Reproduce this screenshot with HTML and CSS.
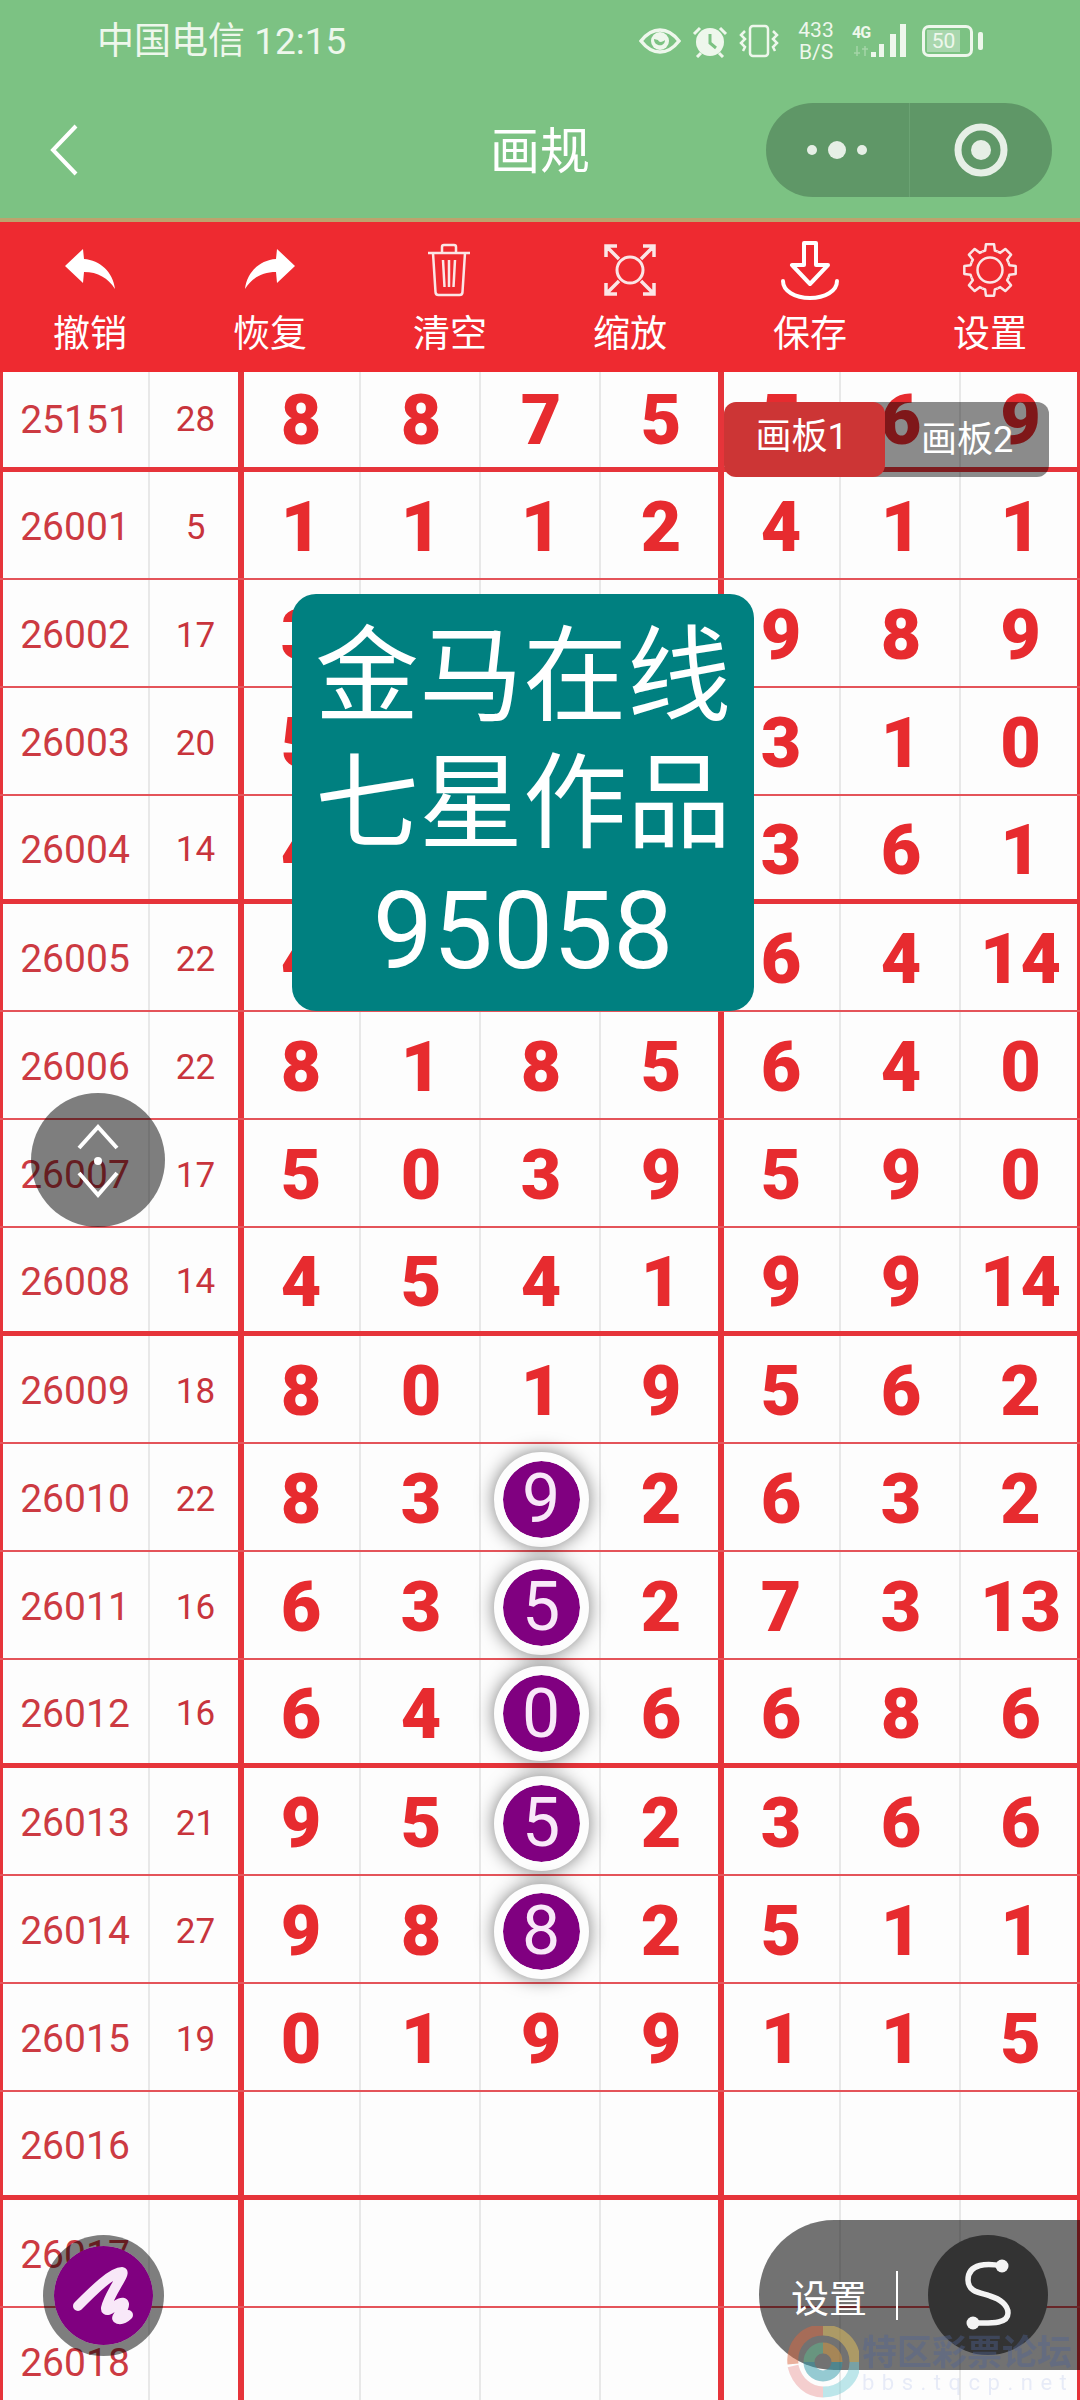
FILE: index.html
```html
<!doctype html>
<html>
<head>
  <meta charset="utf-8">
  <title>画规</title>
  <link rel="stylesheet" href="styles.css">
</head>
<body>
  <div id="app">
    <div class="top">
      <div class="status">
        <div class="carrier">中国电信 12:15</div>
        <div class="status-icons">
          <svg class="ic-eye" viewBox="0 0 42 26"><path d="M2 13C9 4 15 2 21 2s12 2 19 11c-7 9-13 11-19 11S9 22 2 13z" fill="none" stroke="#eef7ec" stroke-width="3.5"/><circle cx="21" cy="13" r="9" fill="#eef7ec"/><path d="M15 11c0 5 4 7 8 6 2-1 3-3 3-5-2 2-6 3-7 0z" fill="#7cc283"/></svg>
          <svg class="ic-alarm" viewBox="0 0 36 33"><circle cx="18" cy="17" r="14" fill="#eef7ec"/><path d="M18 9v9l6 5" fill="none" stroke="#7cc283" stroke-width="3"/><path d="M2 9l6-6M34 9l-6-6M5 32l4-4M31 32l-4-4" stroke="#eef7ec" stroke-width="3"/></svg>
          <svg class="ic-vib" viewBox="0 0 40 34"><rect x="11" y="2" width="18" height="30" rx="3" fill="none" stroke="#eef7ec" stroke-width="2.5"/><path d="M6 7L2 11l4 4-4 4 4 4-2 4M34 7l4 4-4 4 4 4-4 4 2 4" fill="none" stroke="#eef7ec" stroke-width="2.5"/></svg>
          <div class="speed">433<br>B/S</div>
          <div class="net">
            <div class="net-type">4G<svg class="ic-updown" viewBox="0 0 18 10"><path d="M5 0v10M13 0v10M2 7h6M10 3h6" stroke="#eef7ec" stroke-width="1.5"/></svg></div>
            <svg class="ic-bars" viewBox="0 0 36 34"><rect x="0" y="28" width="5" height="5" fill="#eef7ec"/><rect x="8" y="20" width="5" height="13" fill="#eef7ec"/><rect x="19" y="10" width="6" height="23" fill="#eef7ec"/><rect x="29" y="0" width="6" height="33" fill="#eef7ec"/></svg>
          </div>
          <div class="battery"><div class="battery-level">50</div></div>
          <div class="battery-nub"></div>
        </div>
      </div>
      <div class="nav">
        <svg class="back" viewBox="0 0 30 52"><path d="M27 2L4 26l23 24" fill="none" stroke="#fff" stroke-width="4"/></svg>
        <div class="nav-title">画规</div>
        <div class="capsule">
          <div class="capsule-side">
            <svg width="64" height="20" viewBox="0 0 64 20"><circle cx="7" cy="10" r="5" fill="#e6efe6"/><circle cx="32" cy="10" r="9" fill="#e6efe6"/><circle cx="57" cy="10" r="5" fill="#e6efe6"/></svg>
          </div>
          <div class="capsule-side">
            <svg width="54" height="54" viewBox="0 0 54 54"><circle cx="27" cy="27" r="23" fill="none" stroke="#e6efe6" stroke-width="7"/><circle cx="27" cy="27" r="10" fill="#e6efe6"/></svg>
          </div>
        </div>
      </div>
    </div>

    <div class="toolbar">
      <div class="tool">
        <svg viewBox="0 0 60 60"><path d="M5 26L23 9l1 10c16 1 29 13 31 30-7-11-17-17-31-17l-1 11z" fill="#fff"/></svg>
        <div class="tool-label">撤销</div>
      </div>
      <div class="tool">
        <svg viewBox="0 0 60 60"><path d="M55 26L37 9l-1 10C20 20 7 32 5 49c7-11 17-17 31-17l1 11z" fill="#fff"/></svg>
        <div class="tool-label">恢复</div>
      </div>
      <div class="tool">
        <svg viewBox="0 0 60 60" fill="none" stroke="#fbe6e6" stroke-width="2.5"><path d="M8 13h42M22 12V7q0-2 2-2h10q2 0 2 2v5M13 13l2.500 39q0 3 3 3h21q3 0 3-3L45 13M23 20l1.500 27M29 20v27M35 20l-1.500 27"/></svg>
        <div class="tool-label">清空</div>
      </div>
      <div class="tool">
        <svg viewBox="0 0 60 60" fill="none" stroke="#fbe6e6" stroke-width="3.5"><circle cx="30" cy="30" r="13" stroke-width="3"/><path d="M6 17V6h11M6 6l13 13M54 17V6H43M54 6L41 19M6 43v11h11M6 54l13-13M54 43v11H43M54 54L41 41"/></svg>
        <div class="tool-label">缩放</div>
      </div>
      <div class="tool">
        <svg viewBox="0 0 60 60" fill="none" stroke="#fff" stroke-width="4" stroke-linejoin="round" stroke-linecap="round"><path d="M24 3h12v22h12L30 44 12 25h12zM3 41c0 10 12 17 27 17s27-7 27-17"/></svg>
        <div class="tool-label">保存</div>
      </div>
      <div class="tool">
        <svg viewBox="0 0 60 60" fill="none" stroke="#fbe6e6" stroke-width="2.5" stroke-linejoin="round">
          <g id="tooth"><path d="M22.35 11.52L25.16 10.6 25.93 4.32H34.07L34.84 10.6 37.65 11.52"/></g>
          <use href="#tooth" transform="rotate(45 30 30)"/>
          <use href="#tooth" transform="rotate(90 30 30)"/>
          <use href="#tooth" transform="rotate(135 30 30)"/>
          <use href="#tooth" transform="rotate(180 30 30)"/>
          <use href="#tooth" transform="rotate(225 30 30)"/>
          <use href="#tooth" transform="rotate(270 30 30)"/>
          <use href="#tooth" transform="rotate(315 30 30)"/>
          <circle cx="30" cy="30" r="12.5"/>
        </svg>
        <div class="tool-label">设置</div>
      </div>
    </div>

    <div class="sheet">
      <div class="row row-first row-thick"><div class="id">25151</div><div class="sum">28</div><div class="num">8</div><div class="num">8</div><div class="num">7</div><div class="num">5</div><div class="num">5</div><div class="num">6</div><div class="num">9</div></div>
      <div class="row"><div class="id">26001</div><div class="sum">5</div><div class="num">1</div><div class="num">1</div><div class="num">1</div><div class="num">2</div><div class="num">4</div><div class="num">1</div><div class="num">1</div></div>
      <div class="row"><div class="id">26002</div><div class="sum">17</div><div class="num">3</div><div class="num"></div><div class="num"></div><div class="num"></div><div class="num">9</div><div class="num">8</div><div class="num">9</div></div>
      <div class="row"><div class="id">26003</div><div class="sum">20</div><div class="num">5</div><div class="num"></div><div class="num"></div><div class="num"></div><div class="num">3</div><div class="num">1</div><div class="num">0</div></div>
      <div class="row row-thick"><div class="id">26004</div><div class="sum">14</div><div class="num">4</div><div class="num"></div><div class="num"></div><div class="num"></div><div class="num">3</div><div class="num">6</div><div class="num">1</div></div>
      <div class="row"><div class="id">26005</div><div class="sum">22</div><div class="num">4</div><div class="num"></div><div class="num"></div><div class="num"></div><div class="num">6</div><div class="num">4</div><div class="num">14</div></div>
      <div class="row"><div class="id">26006</div><div class="sum">22</div><div class="num">8</div><div class="num">1</div><div class="num">8</div><div class="num">5</div><div class="num">6</div><div class="num">4</div><div class="num">0</div></div>
      <div class="row"><div class="id">26007</div><div class="sum">17</div><div class="num">5</div><div class="num">0</div><div class="num">3</div><div class="num">9</div><div class="num">5</div><div class="num">9</div><div class="num">0</div></div>
      <div class="row row-thick"><div class="id">26008</div><div class="sum">14</div><div class="num">4</div><div class="num">5</div><div class="num">4</div><div class="num">1</div><div class="num">9</div><div class="num">9</div><div class="num">14</div></div>
      <div class="row"><div class="id">26009</div><div class="sum">18</div><div class="num">8</div><div class="num">0</div><div class="num">1</div><div class="num">9</div><div class="num">5</div><div class="num">6</div><div class="num">2</div></div>
      <div class="row"><div class="id">26010</div><div class="sum">22</div><div class="num">8</div><div class="num">3</div><div class="num"><span class="ball">9</span></div><div class="num">2</div><div class="num">6</div><div class="num">3</div><div class="num">2</div></div>
      <div class="row"><div class="id">26011</div><div class="sum">16</div><div class="num">6</div><div class="num">3</div><div class="num"><span class="ball">5</span></div><div class="num">2</div><div class="num">7</div><div class="num">3</div><div class="num">13</div></div>
      <div class="row row-thick"><div class="id">26012</div><div class="sum">16</div><div class="num">6</div><div class="num">4</div><div class="num"><span class="ball">0</span></div><div class="num">6</div><div class="num">6</div><div class="num">8</div><div class="num">6</div></div>
      <div class="row"><div class="id">26013</div><div class="sum">21</div><div class="num">9</div><div class="num">5</div><div class="num"><span class="ball">5</span></div><div class="num">2</div><div class="num">3</div><div class="num">6</div><div class="num">6</div></div>
      <div class="row"><div class="id">26014</div><div class="sum">27</div><div class="num">9</div><div class="num">8</div><div class="num"><span class="ball">8</span></div><div class="num">2</div><div class="num">5</div><div class="num">1</div><div class="num">1</div></div>
      <div class="row"><div class="id">26015</div><div class="sum">19</div><div class="num">0</div><div class="num">1</div><div class="num">9</div><div class="num">9</div><div class="num">1</div><div class="num">1</div><div class="num">5</div></div>
      <div class="row row-thick"><div class="id">26016</div><div class="sum"></div><div class="num"></div><div class="num"></div><div class="num"></div><div class="num"></div><div class="num"></div><div class="num"></div><div class="num"></div></div>
      <div class="row"><div class="id">26017</div><div class="sum"></div><div class="num"></div><div class="num"></div><div class="num"></div><div class="num"></div><div class="num"></div><div class="num"></div><div class="num"></div></div>
      <div class="row"><div class="id">26018</div><div class="sum"></div><div class="num"></div><div class="num"></div><div class="num"></div><div class="num"></div><div class="num"></div><div class="num"></div><div class="num"></div></div>
    </div>

    <!-- floating bits over the sheet -->
    <div class="boards">
      <div class="board board-on">画板1</div>
      <div class="board">画板2</div>
    </div>

    <div class="promo">
      <div>金马在线</div>
      <div>七星作品</div>
      <div class="promo-num">95058</div>
    </div>

    <div class="scroller">
      <svg width="134" height="134" viewBox="0 0 134 134" fill="none" stroke="#fff" stroke-width="4"><path d="M48 55l19-21 19 21M48 80l19 22 19-22"/><circle cx="67" cy="68" r="4" fill="#fff" stroke="none"/></svg>
    </div>

    <div class="pen">
      <svg width="99" height="99" viewBox="0 0 99 99" fill="none" stroke="#f8e8f8" stroke-width="10" stroke-linecap="round" stroke-linejoin="round"><path d="M24 60C40 44 58 26 68 26 72 27 55 48 52 62 51 70 68 52 70 58 71 64 60 72 64 73 68 74 72 71 74 69"/></svg>
    </div>

    <div class="setbar">
      <div class="setbar-label">设置</div>
      <div class="setbar-line"></div>
      <div class="setbar-btn">
        <svg width="120" height="120" viewBox="0 0 120 120" fill="none" stroke="#f4f4f4" stroke-width="5.5"><path d="M74 31C60 28 40 28 40 45 40 58 55 58 62 61 72 64 80 70 80 78 80 90 60 88 45 88"/><circle cx="74" cy="31" r="6.5" fill="#f4f4f4" stroke="none"/><circle cx="45" cy="88" r="6.5" fill="#f4f4f4" stroke="none"/></svg>
      </div>
    </div>

    <div class="mark">
      <svg width="72" height="72" viewBox="0 0 72 72" fill="none" stroke-width="11" opacity=".5">
        <path d="M36 4C16 4 4 20 6 38" stroke="#d9663f"/>
        <path d="M36 4c18 0 32 14 32 32" stroke="#e6c25a"/>
        <path d="M68 36c0 18-14 30-32 30" stroke="#7fcfd8"/>
        <path d="M36 66C22 66 10 56 6 40" stroke="#eba0a0"/>
        <path d="M22 36a14 14 0 0 1 14-14" stroke="#5fb88c"/>
        <path d="M36 22a14 14 0 0 1 14 14" stroke="#d99a3c"/>
        <path d="M50 36a14 14 0 0 1-14 14 14 14 0 0 1-14-14" stroke="#2f97a8"/>
      </svg>
      <div>
        <div class="mark-name">特区彩票论坛</div>
        <div class="mark-url">bbs.tqcp.net</div>
      </div>
    </div>
  </div>
</body>
</html>
```
FILE: styles.css
```css
html, body {
  margin: 0;
  padding: 0;
  background: #fdfdfd;
}
#app {
  position: relative;
  width: 1080px;
  height: 2400px;
  overflow: hidden;
  font-family: Roboto, "Noto Sans CJK SC", sans-serif;
}

/* green header */
.top {
  height: 218px;
  background: #7cc283;
  border-bottom: 4px solid #bda36d;
}
.status {
  display: flex;
  justify-content: space-between;
  align-items: center;
  height: 82px;
  padding: 0 97px 0 97px;
  color: #eef7ec;
}
.carrier {
  margin-top: 2px;
  font-size: 37px;
  line-height: 40px;
}
.status-icons {
  display: flex;
  align-items: center;
}
.ic-eye { width: 42px; height: 26px; margin-right: 11px; }
.ic-alarm { width: 36px; height: 33px; margin-right: 11px; }
.ic-vib { width: 40px; height: 34px; margin-right: 18px; }
.speed {
  width: 38px;
  font-size: 21px;
  line-height: 22px;
  text-align: center;
  margin-right: 17px;
}
.net {
  display: flex;
  align-items: flex-start;
  margin-right: 15px;
}
.net-type {
  width: 19px;
  font-size: 16px;
  font-weight: 700;
  line-height: 18px;
  letter-spacing: -1px;
}
.ic-updown {
  display: block;
  width: 18px;
  height: 10px;
  margin-top: 4px;
  opacity: 0.35;
}
.ic-bars { width: 36px; height: 34px; }
.battery {
  box-sizing: border-box;
  width: 51px;
  height: 32px;
  border: 3px solid #eef7ec;
  border-radius: 7px;
  padding: 2px;
  display: flex;
}
.battery-level {
  width: 33px;
  background: rgba(255,255,255,0.35);
  font-size: 21px;
  line-height: 22px;
  text-align: center;
}
.battery-nub {
  width: 5px;
  height: 18px;
  margin-left: 5px;
  background: #eef7ec;
  border-radius: 2px;
}

.nav {
  display: grid;
  grid-template-columns: 1fr auto 1fr;
  align-items: center;
  height: 136px;
}
.back {
  width: 30px;
  height: 52px;
  margin-left: 49px;
}
.nav-title {
  margin-top: 4px;
  font-size: 50px;
  line-height: 56px;
  color: #fff;
}
.capsule {
  display: flex;
  justify-self: end;
  width: 286px;
  height: 94px;
  margin-right: 28px;
  border-radius: 47px;
  background: #5f9767;
}
.capsule-side {
  flex: 1;
  display: flex;
  align-items: center;
  justify-content: center;
}
.capsule-side:first-child {
  border-right: 1px solid #6ba373;
}

/* red tool strip */
.toolbar {
  display: flex;
  height: 150px;
  background: #ee2a30;
}
.tool {
  flex: 1;
  display: flex;
  flex-direction: column;
  align-items: center;
  padding-top: 18px;
}
.tool svg {
  width: 60px;
  height: 60px;
}
.tool-label {
  margin-top: 15px;
  font-size: 37px;
  line-height: 40px;
  color: #fff;
}

/* number sheet */
.row {
  box-sizing: border-box;
  display: grid;
  grid-template-columns: 150px 91px repeat(6, 120px) 119px;
  height: 108px;
  border-bottom: 2px solid #e4545a;
  background: #fdfdfd;
}
.row-first {
  height: 100px;
}
.row-thick {
  border-bottom: 5px solid #e6343a;
}
.id, .sum, .num {
  display: flex;
  align-items: center;
  justify-content: center;
  padding-top: 4px;
  box-shadow: inset -2px 0 0 #e8e8e8;
}
.row-first .id, .row-first .sum, .row-first .num {
  padding-top: 0;
}
.id {
  font-size: 39px;
  color: #cc3a42;
  box-shadow: inset 3px 0 0 #e6343a, inset -2px 0 0 #e8e8e8;
}
.sum {
  font-size: 35px;
  color: #c8343c;
  box-shadow: inset -3px 0 0 #e6343a;
}
.num {
  font-size: 70px;
  font-weight: 900;
  color: #e72b2f;
}
.row .num:nth-child(3), .row .num:nth-child(7) {
  box-shadow: inset 3px 0 0 #e6343a, inset -2px 0 0 #e8e8e8;
}
.row .num:nth-child(6), .row .num:nth-child(9) {
  box-shadow: inset -3px 0 0 #e6343a;
}
.ball {
  box-sizing: border-box;
  width: 95px;
  height: 95px;
  flex: none;
  display: flex;
  align-items: center;
  justify-content: center;
  border: 9px solid #fdfdfd;
  border-radius: 50%;
  background: #800080;
  background-clip: padding-box;
  box-shadow: 0 0 18px rgba(0,0,0,0.5);
  font-size: 68px;
  font-weight: 400;
  color: #f8e8f8;
  position: relative;
}

/* overlays */
.boards {
  position: absolute;
  left: 724px;
  top: 402px;
  display: flex;
}
.board {
  box-sizing: border-box;
  width: 189px;
  height: 75px;
  margin-left: -25px;
  padding: 7px 0 0 25px;
  border-radius: 12px;
  background: rgba(0,0,0,0.45);
  font-size: 36px;
  line-height: 62px;
  text-align: center;
  color: #fff;
}
.board-on {
  position: relative;
  z-index: 1;
  width: 161px;
  margin-left: 0;
  padding: 4px 6px 0 0;
  background: #cc3535;
}
.promo {
  position: absolute;
  left: 292px;
  top: 594px;
  box-sizing: border-box;
  width: 462px;
  height: 417px;
  padding-top: 3px;
  display: flex;
  flex-direction: column;
  justify-content: center;
  border-radius: 24px;
  background: #008080;
  font-size: 104px;
  line-height: 127px;
  text-align: center;
  color: #fff;
}
.promo-num {
  font-size: 107px;
}
.scroller {
  position: absolute;
  left: 31px;
  top: 1093px;
  width: 134px;
  height: 134px;
  border-radius: 50%;
  background: rgba(0,0,0,0.5);
}
.pen {
  position: absolute;
  left: 43px;
  top: 2235px;
  width: 99px;
  height: 99px;
  border: 11px solid rgba(0,0,0,0.5);
  border-radius: 50%;
  background: #800080;
  background-clip: padding-box;
}
.setbar {
  position: absolute;
  left: 759px;
  top: 2220px;
  right: 0;
  height: 150px;
  display: flex;
  align-items: center;
  border-radius: 75px 0 0 75px;
  background: rgba(0,0,0,0.55);
  color: #fff;
}
.setbar-label {
  margin-left: 32px;
  font-size: 38px;
}
.setbar-line {
  width: 2px;
  height: 49px;
  margin-left: 29px;
  background: #fff;
}
.setbar-btn {
  width: 120px;
  height: 120px;
  margin-left: 30px;
  border-radius: 50%;
  background: #333;
}
.mark {
  position: absolute;
  left: 787px;
  top: 2326px;
  display: flex;
  align-items: flex-start;
  filter: blur(0.7px);
}
.mark svg {
  flex: none;
}
.mark-name {
  margin: 10px 0 0 3px;
  font-size: 35px;
  font-weight: 700;
  line-height: 36px;
  white-space: nowrap;
  color: rgba(80,100,150,0.4);
}
.mark-url {
  margin-left: 3px;
  font-size: 22px;
  line-height: 22px;
  letter-spacing: 7.5px;
  white-space: nowrap;
  color: rgba(120,140,220,0.16);
}
```
